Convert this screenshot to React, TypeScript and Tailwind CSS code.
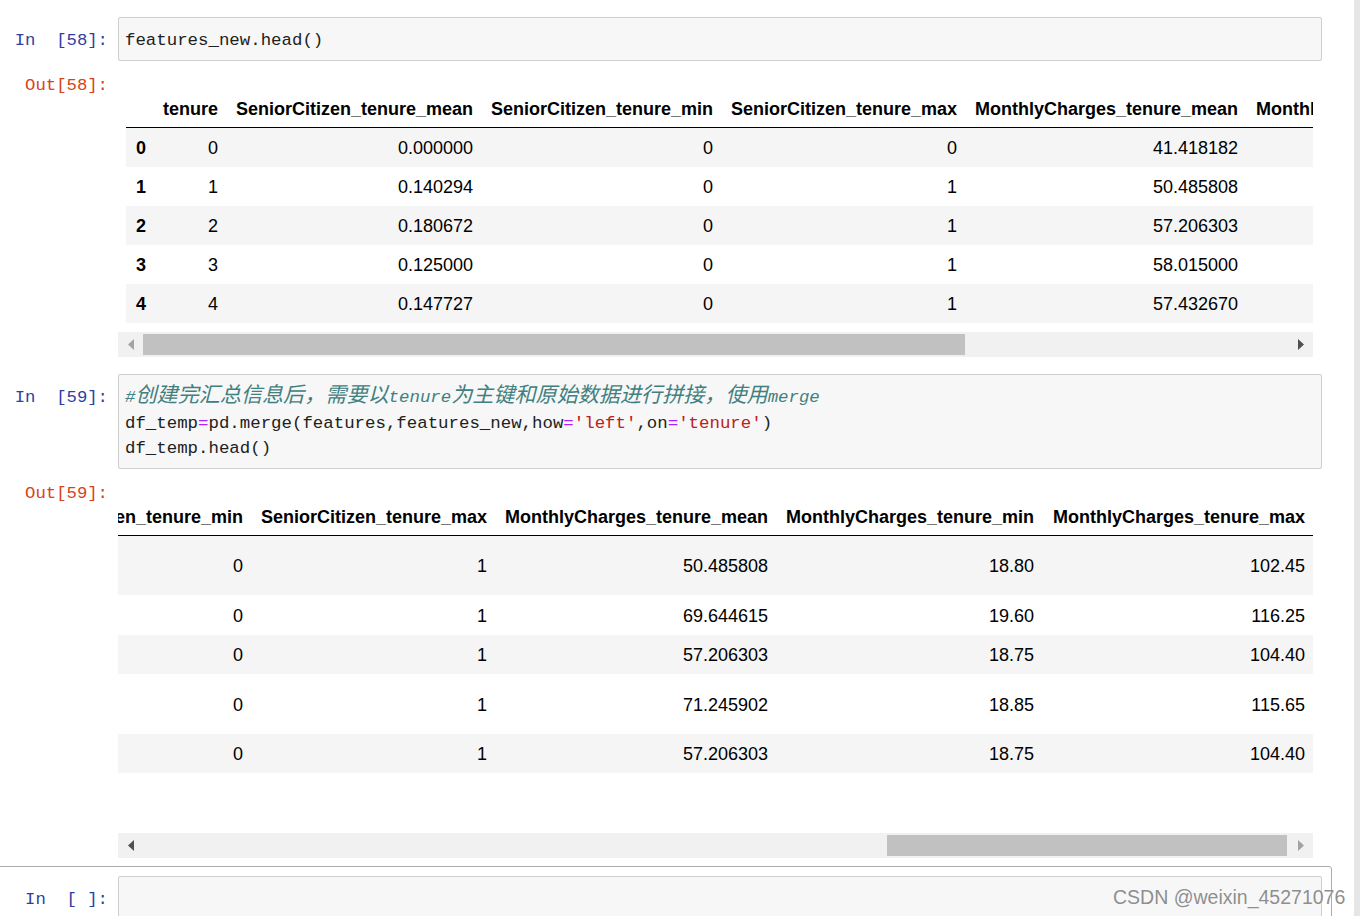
import React from 'react'

const mono = "font-['Liberation_Mono','Noto_Sans_CJK_SC',monospace]"
const sans = "font-['Liberation_Sans',Arial,sans-serif]"

type Col = { label: string; w: number; pr?: number }

const cols1: Col[] = [
    { label: '', w: 28 },
    { label: 'tenure', w: 74 },
    { label: 'SeniorCitizen_tenure_mean', w: 255 },
    { label: 'SeniorCitizen_tenure_min', w: 240 },
    { label: 'SeniorCitizen_tenure_max', w: 244 },
    { label: 'MonthlyCharges_tenure_mean', w: 281 },
    { label: 'MonthlyCharges_tenure_min', w: 266 },
]

const rows1 = [
    ['0', '0', '0.000000', '0', '0', '41.418182', ''],
    ['1', '1', '0.140294', '0', '1', '50.485808', ''],
    ['2', '2', '0.180672', '0', '1', '57.206303', ''],
    ['3', '3', '0.125000', '0', '1', '58.015000', ''],
    ['4', '4', '0.147727', '0', '1', '57.432670', ''],
]

const cols2: Col[] = [
    { label: 'SeniorCitizen_tenure_min', w: 240 },
    { label: 'SeniorCitizen_tenure_max', w: 244 },
    { label: 'MonthlyCharges_tenure_mean', w: 281 },
    { label: 'MonthlyCharges_tenure_min', w: 266 },
    { label: 'MonthlyCharges_tenure_max', w: 269, pr: 8 },
]

const rows2 = [
    { h: 59, cells: ['0', '1', '50.485808', '18.80', '102.45'] },
    { h: 40, cells: ['0', '1', '69.644615', '19.60', '116.25'] },
    { h: 39, cells: ['0', '1', '57.206303', '18.75', '104.40'] },
    { h: 60, cells: ['0', '1', '71.245902', '18.85', '115.65'] },
    { h: 39, cells: ['0', '1', '57.206303', '18.75', '104.40'] },
]

function Prompt({ text, out }: { text: string; out?: boolean }) {
    return (
        <div
            className={`w-[118px] shrink-0 pr-[10px] text-right whitespace-pre text-[17.3px] ${mono} ${
                out ? 'text-[#d84315] leading-[26px] pt-[2px]' : 'text-[#303f9f] leading-[25.5px] pt-[11px]'
            }`}
        >
            {text}
        </div>
    )
}

function InputBox({ children, h }: { children?: React.ReactNode; h: number }) {
    return (
        <div
            className={`w-[1204px] shrink-0 border border-[#cfcfcf] rounded-[2px] bg-[#f7f7f7] px-[6px] pt-[10px] text-[17.4px] leading-[25.5px] text-[#212121] whitespace-pre ${mono}`}
            style={{ height: h }}
        >
            {children}
        </div>
    )
}

function Arrow({ dir, active }: { dir: 'left' | 'right'; active: boolean }) {
    return (
        <div className="w-[25px] h-full flex items-center justify-center shrink-0">
            <svg width="6" height="11" viewBox="0 0 6 11">
                <polygon
                    points={dir === 'left' ? '6,0 6,11 0,5.5' : '0,0 0,11 6,5.5'}
                    fill={active ? '#505050' : '#a3a3a3'}
                />
            </svg>
        </div>
    )
}

function ScrollBar({ offset, width, leftActive }: { offset: number; width: number; leftActive: boolean }) {
    return (
        <div className="w-[1195px] h-[25px] bg-[#f1f1f1] flex items-center">
            <Arrow dir="left" active={leftActive} />
            <div className="h-[21px] bg-[#c1c1c1] shrink-0" style={{ marginLeft: offset, width }} />
            <div className="flex-1" />
            <Arrow dir="right" active={!leftActive} />
        </div>
    )
}

function Cell({ c, value, bold }: { c: Col; value: string; bold?: boolean }) {
    const isIndex = c.label === '' && c.w === 28
    return (
        <div
            className={`shrink-0 h-full pt-[2px] flex items-center ${isIndex ? 'justify-start pl-[10px]' : 'justify-end'} ${
                bold || isIndex ? 'font-bold' : ''
            } whitespace-nowrap`}
            style={{ width: c.w, paddingRight: isIndex ? 0 : c.pr ?? 10 }}
        >
            {value}
        </div>
    )
}

function Table1() {
    return (
        <div className={`w-[1195px] overflow-hidden text-[18px] text-black ${sans}`}>
            <div className="ml-[8px] w-max">
                <div className="flex h-[39px] border-b border-black">
                    {cols1.map((c, i) => (
                        <Cell key={i} c={c} value={c.label} bold />
                    ))}
                </div>
                {rows1.map((r, ri) => (
                    <div key={ri} className={`flex h-[39px] ${ri % 2 === 0 ? 'bg-[#f5f5f5]' : 'bg-white'}`}>
                        {cols1.map((c, i) => (
                            <Cell key={i} c={c} value={r[i]} />
                        ))}
                    </div>
                ))}
            </div>
        </div>
    )
}

function Table2() {
    return (
        <div className={`w-[1195px] overflow-hidden text-[18px] text-black ${sans}`}>
            <div className="ml-[-105px] w-max">
                <div className="flex h-[39px] border-b border-black">
                    {cols2.map((c, i) => (
                        <Cell key={i} c={c} value={c.label} bold />
                    ))}
                </div>
                {rows2.map((r, ri) => (
                    <div
                        key={ri}
                        className={`flex ${ri % 2 === 0 ? 'bg-[#f5f5f5]' : 'bg-white'}`}
                        style={{ height: r.h }}
                    >
                        {cols2.map((c, i) => (
                            <Cell key={i} c={c} value={r.cells[i]} />
                        ))}
                    </div>
                ))}
            </div>
        </div>
    )
}

const cjk = 'text-[21.1px] leading-none'

export default function App() {
    return (
        <div className="relative w-[1360px] h-[916px] overflow-hidden bg-white flex">
            <div className="flex-1 pt-[17px]">
                {/* In [58] */}
                <div className="flex">
                    <Prompt text="In  [58]:" />
                    <InputBox h={44}>features_new.head()</InputBox>
                </div>

                {/* Out [58] */}
                <div className="flex mt-[10px]">
                    <Prompt text="Out[58]:" out />
                    <div className="pt-[18px]">
                        <Table1 />
                        <div className="mt-[9px]">
                            <ScrollBar offset={0} width={822} leftActive={false} />
                        </div>
                    </div>
                </div>

                {/* In [59] */}
                <div className="flex mt-[17px]">
                    <Prompt text="In  [59]:" />
                    <InputBox h={95}>
                        <div className="italic text-[#408080]">
                            #<span className={cjk}>创建完汇总信息后，需要以</span>tenure
                            <span className={cjk}>为主键和原始数据进行拼接，使用</span>merge
                        </div>
                        <div>
                            df_temp<span className="text-[#aa22ff]">=</span>pd.merge(features,features_new,how
                            <span className="text-[#aa22ff]">=</span>
                            <span className="text-[#ba2121]">'left'</span>,on
                            <span className="text-[#aa22ff]">=</span>
                            <span className="text-[#ba2121]">'tenure'</span>)
                        </div>
                        <div>df_temp.head()</div>
                    </InputBox>
                </div>

                {/* Out [59] */}
                <div className="flex mt-[10px]">
                    <Prompt text="Out[59]:" out />
                    <div className="pt-[18px]">
                        <Table2 />
                        <div className="mt-[60px]">
                            <ScrollBar offset={744} width={400} leftActive />
                        </div>
                    </div>
                </div>

                {/* In [ ] selected */}
                <div className="mt-[8px] ml-[-1px] w-[1333px] h-[100px] border border-[#ababab] rounded-tr-[3px] pt-[9px]">
                    <div className="flex">
                        <Prompt text="In  [ ]:" />
                        <InputBox h={60} />
                    </div>
                </div>
            </div>
            <div className="w-[6px] h-full bg-[#e6e6e6]" />

            <div
                className={`absolute left-[1113px] top-[885px] text-[19.5px] leading-[24px] text-[#8e8e8e] ${sans} [text-shadow:0_0_1px_#fff]`}
            >
                CSDN @weixin_45271076
            </div>
        </div>
    )
}
